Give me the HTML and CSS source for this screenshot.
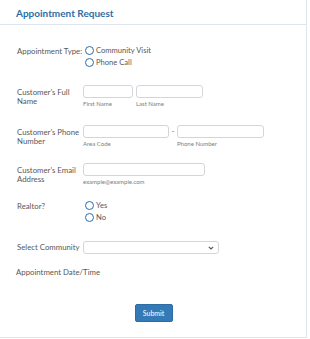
FILE: index.html
```html
<!DOCTYPE html>
<html lang="en">
<head>
    <meta charset="UTF-8" />
    <meta name="viewport" content="width=device-width, initial-scale=1.0" />
    <title>Appointment Request</title>
    <link rel="stylesheet" href="styles.css">
</head>
<body>
    <div class="form-box">
        <div class="header">
            <h2>Appointment Request</h2>
        </div>
        <form class="form-body">
            <div class="row row-type">
                <label class="label nowrap">Appointment Type:</label>
                <div class="radios">
                    <label class="radio"><span class="circle"></span>Community Visit</label>
                    <label class="radio"><span class="circle"></span>Phone Call</label>
                </div>
            </div>

            <div class="row row-name">
                <label class="label">Customer's Full Name</label>
                <div class="fields">
                    <div class="field">
                        <input type="text" class="input first" />
                        <span class="sub">First Name</span>
                    </div>
                    <div class="field">
                        <input type="text" class="input last" />
                        <span class="sub">Last Name</span>
                    </div>
                </div>
            </div>

            <div class="row row-phone">
                <label class="label">Customer's Phone Number</label>
                <div class="fields">
                    <div class="field">
                        <input type="text" class="input area" />
                        <span class="sub">Area Code</span>
                    </div>
                    <span class="dash">-</span>
                    <div class="field">
                        <input type="text" class="input phone" />
                        <span class="sub">Phone Number</span>
                    </div>
                </div>
            </div>

            <div class="row row-email">
                <label class="label">Customer's Email Address</label>
                <div class="field">
                    <input type="text" class="input email" />
                    <span class="sub">example@example.com</span>
                </div>
            </div>

            <div class="row row-realtor">
                <label class="label">Realtor?</label>
                <div class="radios">
                    <label class="radio"><span class="circle"></span>Yes</label>
                    <label class="radio"><span class="circle"></span>No</label>
                </div>
            </div>

            <div class="row row-select">
                <label class="label">Select Community</label>
                <div class="select">
                    <svg width="6" height="4" viewBox="0 0 6 4"><path d="M0.8 0.8 L3 3 L5.2 0.8" fill="none" stroke="#555" stroke-width="1.1"/></svg>
                </div>
            </div>

            <div class="row row-date">
                <label class="label wide">Appointment Date/Time</label>
            </div>

            <div class="actions">
                <button type="button" class="btn-submit">Submit</button>
            </div>
        </form>
    </div>
</body>
</html>
```

FILE: styles.css
```css
* {
    margin: 0;
    box-sizing: border-box;
}
body {
    background: rgb(255, 255, 255);
    font-family: "Lato", "Open Sans", sans-serif;
    color: rgb(88, 88, 88);
}
.form-box {
    width: 307px;
    height: 338px;
    border-right: 1px solid rgb(222, 229, 237);
    border-bottom: 1px solid rgb(222, 229, 237);
}
.header {
    height: 25px;
    padding: 7px 16px 0;
    border-bottom: 1px solid rgb(222, 229, 237);
}
h2 {
    font-size: 10px;
    line-height: 12px;
    font-weight: 700;
    color: rgb(44, 110, 168);
}
.form-body {
    padding: 0 17px;
}
.row {
    display: flex;
    align-items: flex-start;
}
.label {
    width: 66px;
    flex-shrink: 0;
    font-size: 7.8px;
    line-height: 8.5px;
    padding-right: 1px;
}
.label.nowrap {
    white-space: nowrap;
}
.label.wide {
    width: auto;
}
.row-type {
    margin-top: 21px;
}
.row-type .label {
    padding-top: 1px;
}
.radios {
    display: flex;
    flex-direction: column;
    gap: 3px;
    padding-left: 2px;
}
.radio {
    display: flex;
    align-items: center;
    gap: 2px;
    font-size: 7.6px;
    line-height: 9px;
}
.circle {
    width: 9px;
    height: 9px;
    border: 1.3px solid rgb(44, 110, 168);
    border-radius: 50%;
}
.fields {
    display: flex;
    gap: 3px;
}
.field {
    display: flex;
    flex-direction: column;
}
.input {
    height: 13px;
    border: 1px solid rgb(210, 214, 219);
    border-radius: 3px;
    background: white;
    padding: 0;
}
.first { width: 50px; }
.last { width: 67px; }
.area { width: 86px; }
.phone { width: 87px; }
.email { width: 122px; }
.sub {
    font-size: 6px;
    line-height: 6px;
    margin-top: 3px;
    color: rgb(125, 125, 125);
}
.dash {
    font-size: 7px;
    line-height: 13px;
    width: 4px;
    text-align: center;
    margin: 0 -1px;
}
.row-name {
    margin-top: 18px;
}
.row-name .label, .row-phone .label, .row-email .label {
    padding-top: 3px;
}
.row-phone {
    margin-top: 18px;
}
.row-email {
    margin-top: 16px;
}
.row-realtor {
    margin-top: 16px;
}
.row-realtor .label {
    padding-top: 1px;
}
.row-select {
    margin-top: 19px;
    align-items: center;
}
.select {
    width: 136px;
    height: 13px;
    border: 1px solid rgb(210, 214, 219);
    border-radius: 3px;
    display: flex;
    align-items: center;
    justify-content: flex-end;
    padding-right: 4px;
}
.select svg {
    display: block;
}
.row-date {
    margin-top: 14px;
}
.row-date .label {
    margin-left: -1px;
}
.actions {
    display: flex;
    justify-content: center;
    margin-top: 27px;
}
.btn-submit {
    width: 38px;
    height: 18px;
    margin-left: 1px;
    font-family: "Lato", "Open Sans", sans-serif;
    font-size: 7px;
    color: white;
    background: rgb(51, 122, 183);
    border: 1px solid rgb(46, 109, 164);
    border-radius: 2px;
    padding: 0;
}
```
